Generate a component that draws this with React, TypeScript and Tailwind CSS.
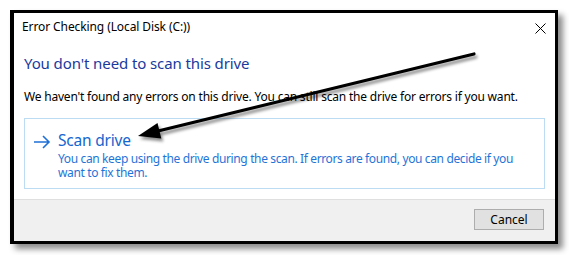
import React from "react";

export default function App() {
  const font = { fontFamily: '"Noto Sans", "Open Sans", Arial, sans-serif' };
  return (
    <div className="relative w-[569px] h-[255px] bg-white overflow-hidden" style={font}>
      <div className="absolute left-[10px] top-[10px] w-[548px] h-[234px] border-[3px] border-l-4 border-black bg-white shadow-[5px_5px_6px_rgba(0,0,0,0.45)] flex flex-col">
        {/* title bar */}
        <div className="flex items-start justify-between pl-[8px] pr-[9px] pt-[6px] h-[34px]">
          <span className="text-[12px] leading-[16px] text-black tracking-[-0.1px]">Error Checking (Local Disk (C:))</span>
          <svg width="11" height="11" viewBox="0 0 11 11" className="mt-[4px]">
            <path d="M0.5 0.5 L10.5 10.5 M10.5 0.5 L0.5 10.5" stroke="#000" strokeWidth="1" />
          </svg>
        </div>
        {/* body */}
        <div className="flex flex-col px-[10px] flex-1">
          <div className="text-[15px] leading-[20px] text-[#1a3a9e] mt-[6px] tracking-[-0.1px]">You don't need to scan this drive</div>
          <div className="text-[12px] leading-[16px] text-black mt-[16px] tracking-[-0.2px]">
            We haven't found any errors on this drive. You can still scan the drive for errors if you want.
          </div>
          <div className="mt-[13px] h-[71px] border border-[#bcdcf4] flex items-start pl-[8px] pt-[10px]">
            <svg width="18" height="14" viewBox="0 0 18 14" className="mt-[6px] mr-[7px] shrink-0">
              <path d="M1 7 H16 M10 1 L16 7 L10 13" stroke="#1e6fd6" strokeWidth="1.6" fill="none" />
            </svg>
            <div className="flex flex-col">
              <div className="text-[15.5px] leading-[22px] text-[#1666cf] tracking-[-0.2px]">Scan drive</div>
              <div className="text-[12px] leading-[14px] text-[#1f74d8] mt-[1px] tracking-[-0.37px] w-[462px]">
                You can keep using the drive during the scan. If errors are found, you can decide if you want to fix them.
              </div>
            </div>
          </div>
        </div>
        {/* footer */}
        <div className="h-[42px] bg-[#f0f0f0] border-t border-[#dfdfdf] flex items-start justify-end pr-[11px] pt-[9px]">
          <button className="w-[70px] h-[21px] border border-[#adadad] bg-[#e1e1e1] text-[12px] leading-[18px] text-black">
            Cancel
          </button>
        </div>
      </div>
      <svg className="absolute left-0 top-0 pointer-events-none" width="569" height="255" viewBox="0 0 569 255">
        <defs>
          <filter id="sh" x="-10%" y="-10%" width="130%" height="150%">
            <feDropShadow dx="2" dy="3" stdDeviation="1.6" floodColor="#000" floodOpacity="0.45" />
          </filter>
        </defs>
        <g filter="url(#sh)">
          <line x1="474" y1="54" x2="156" y2="131.5" stroke="#000" strokeWidth="3.2" strokeLinecap="round" />
          <polygon points="138,136 161.3,138.6 157.5,123" fill="#000" />
        </g>
      </svg>
    </div>
  );
}
